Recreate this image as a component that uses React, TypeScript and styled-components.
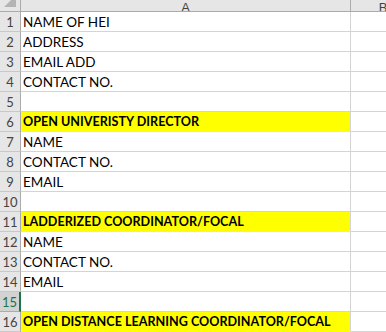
import { Fragment } from 'react';
import styled, { createGlobalStyle } from 'styled-components';

const GlobalStyle = createGlobalStyle`
  html, body {
    margin: 0;
    padding: 0;
    background: #fff;
    overflow: hidden;
  }
`;

const Sheet = styled.div`
  display: grid;
  grid-template-columns: 21px 330px 65px;
  grid-auto-rows: 20px;
  grid-template-rows: 12px;
  font-family: Lato, 'Liberation Sans', sans-serif;
  font-size: 13.5px;
  color: #000;
  width: 416px;
`;

const Corner = styled.div`
  background: #e6e6e6;
  border-right: 1px solid #ababab;
  border-bottom: 1px solid #ababab;
  position: relative;
  overflow: hidden;

  svg {
    position: absolute;
    left: 4px;
    top: -5px;
  }
`;

const ColHead = styled.div`
  background: #e6e6e6;
  border-right: 1px solid #ababab;
  border-bottom: 1px solid #ababab;
  display: flex;
  justify-content: center;
  align-items: flex-end;
  overflow: hidden;
  color: #444;
  font-family: 'Liberation Sans', sans-serif;
  font-size: 13px;

  span {
    line-height: 13px;
    margin-bottom: -3px;
  }
`;

const RowHead = styled.div<{ $active?: boolean }>`
  background: ${p => (p.$active ? '#d2d2d2' : '#e6e6e6')};
  color: ${p => (p.$active ? '#217346' : '#444')};
  border-bottom: 1px solid ${p => (p.$active ? '#ababab' : '#c8c8c8')};
  border-right: ${p => (p.$active ? '2px solid #217346' : '1px solid #ababab')};
  display: flex;
  align-items: flex-end;
  justify-content: center;
  padding-bottom: 1px;
  box-sizing: border-box;
  font-size: 13px;
  line-height: 16px;
`;

const Cell = styled.div<{ $fill?: boolean; $bold?: boolean }>`
  background: ${p => (p.$fill ? '#ffff00' : '#fff')};
  border-right: 1px solid #d4d4d4;
  border-bottom: 1px solid ${p => (p.$fill ? '#ffff00' : '#d4d4d4')};
  font-weight: ${p => (p.$bold ? 700 : 400)};
  font-size: ${p => (p.$bold ? '12.6px' : '13.5px')};
  display: flex;
  align-items: flex-end;
  padding: 0 0 1px 2px;
  box-sizing: border-box;
  white-space: nowrap;
  overflow: hidden;
  line-height: 16px;
`;

const rows: { text: string; head?: boolean }[] = [
  { text: 'NAME OF HEI' },
  { text: 'ADDRESS' },
  { text: 'EMAIL ADD' },
  { text: 'CONTACT NO.' },
  { text: '' },
  { text: 'OPEN UNIVERISTY DIRECTOR', head: true },
  { text: 'NAME' },
  { text: 'CONTACT NO.' },
  { text: 'EMAIL' },
  { text: '' },
  { text: 'LADDERIZED COORDINATOR/FOCAL', head: true },
  { text: 'NAME' },
  { text: 'CONTACT NO.' },
  { text: 'EMAIL' },
  { text: '' },
  { text: 'OPEN DISTANCE LEARNING COORDINATOR/FOCAL', head: true },
];

const App = () => (
  <>
    <GlobalStyle />
    <Sheet>
      <Corner>
        <svg width="14" height="14" viewBox="0 0 14 14">
          <polygon points="0,12 12,12 12,0" fill="#b4b4b4" />
        </svg>
      </Corner>
      <ColHead>
        <span>A</span>
      </ColHead>
      <ColHead>
        <span>B</span>
      </ColHead>
      {rows.map((r, i) => (
        <Fragment key={i}>
          <RowHead $active={i === 14}>{i + 1}</RowHead>
          <Cell $fill={r.head} $bold={r.head}>
            {r.text}
          </Cell>
          <Cell />
        </Fragment>
      ))}
    </Sheet>
  </>
);

export default App;
